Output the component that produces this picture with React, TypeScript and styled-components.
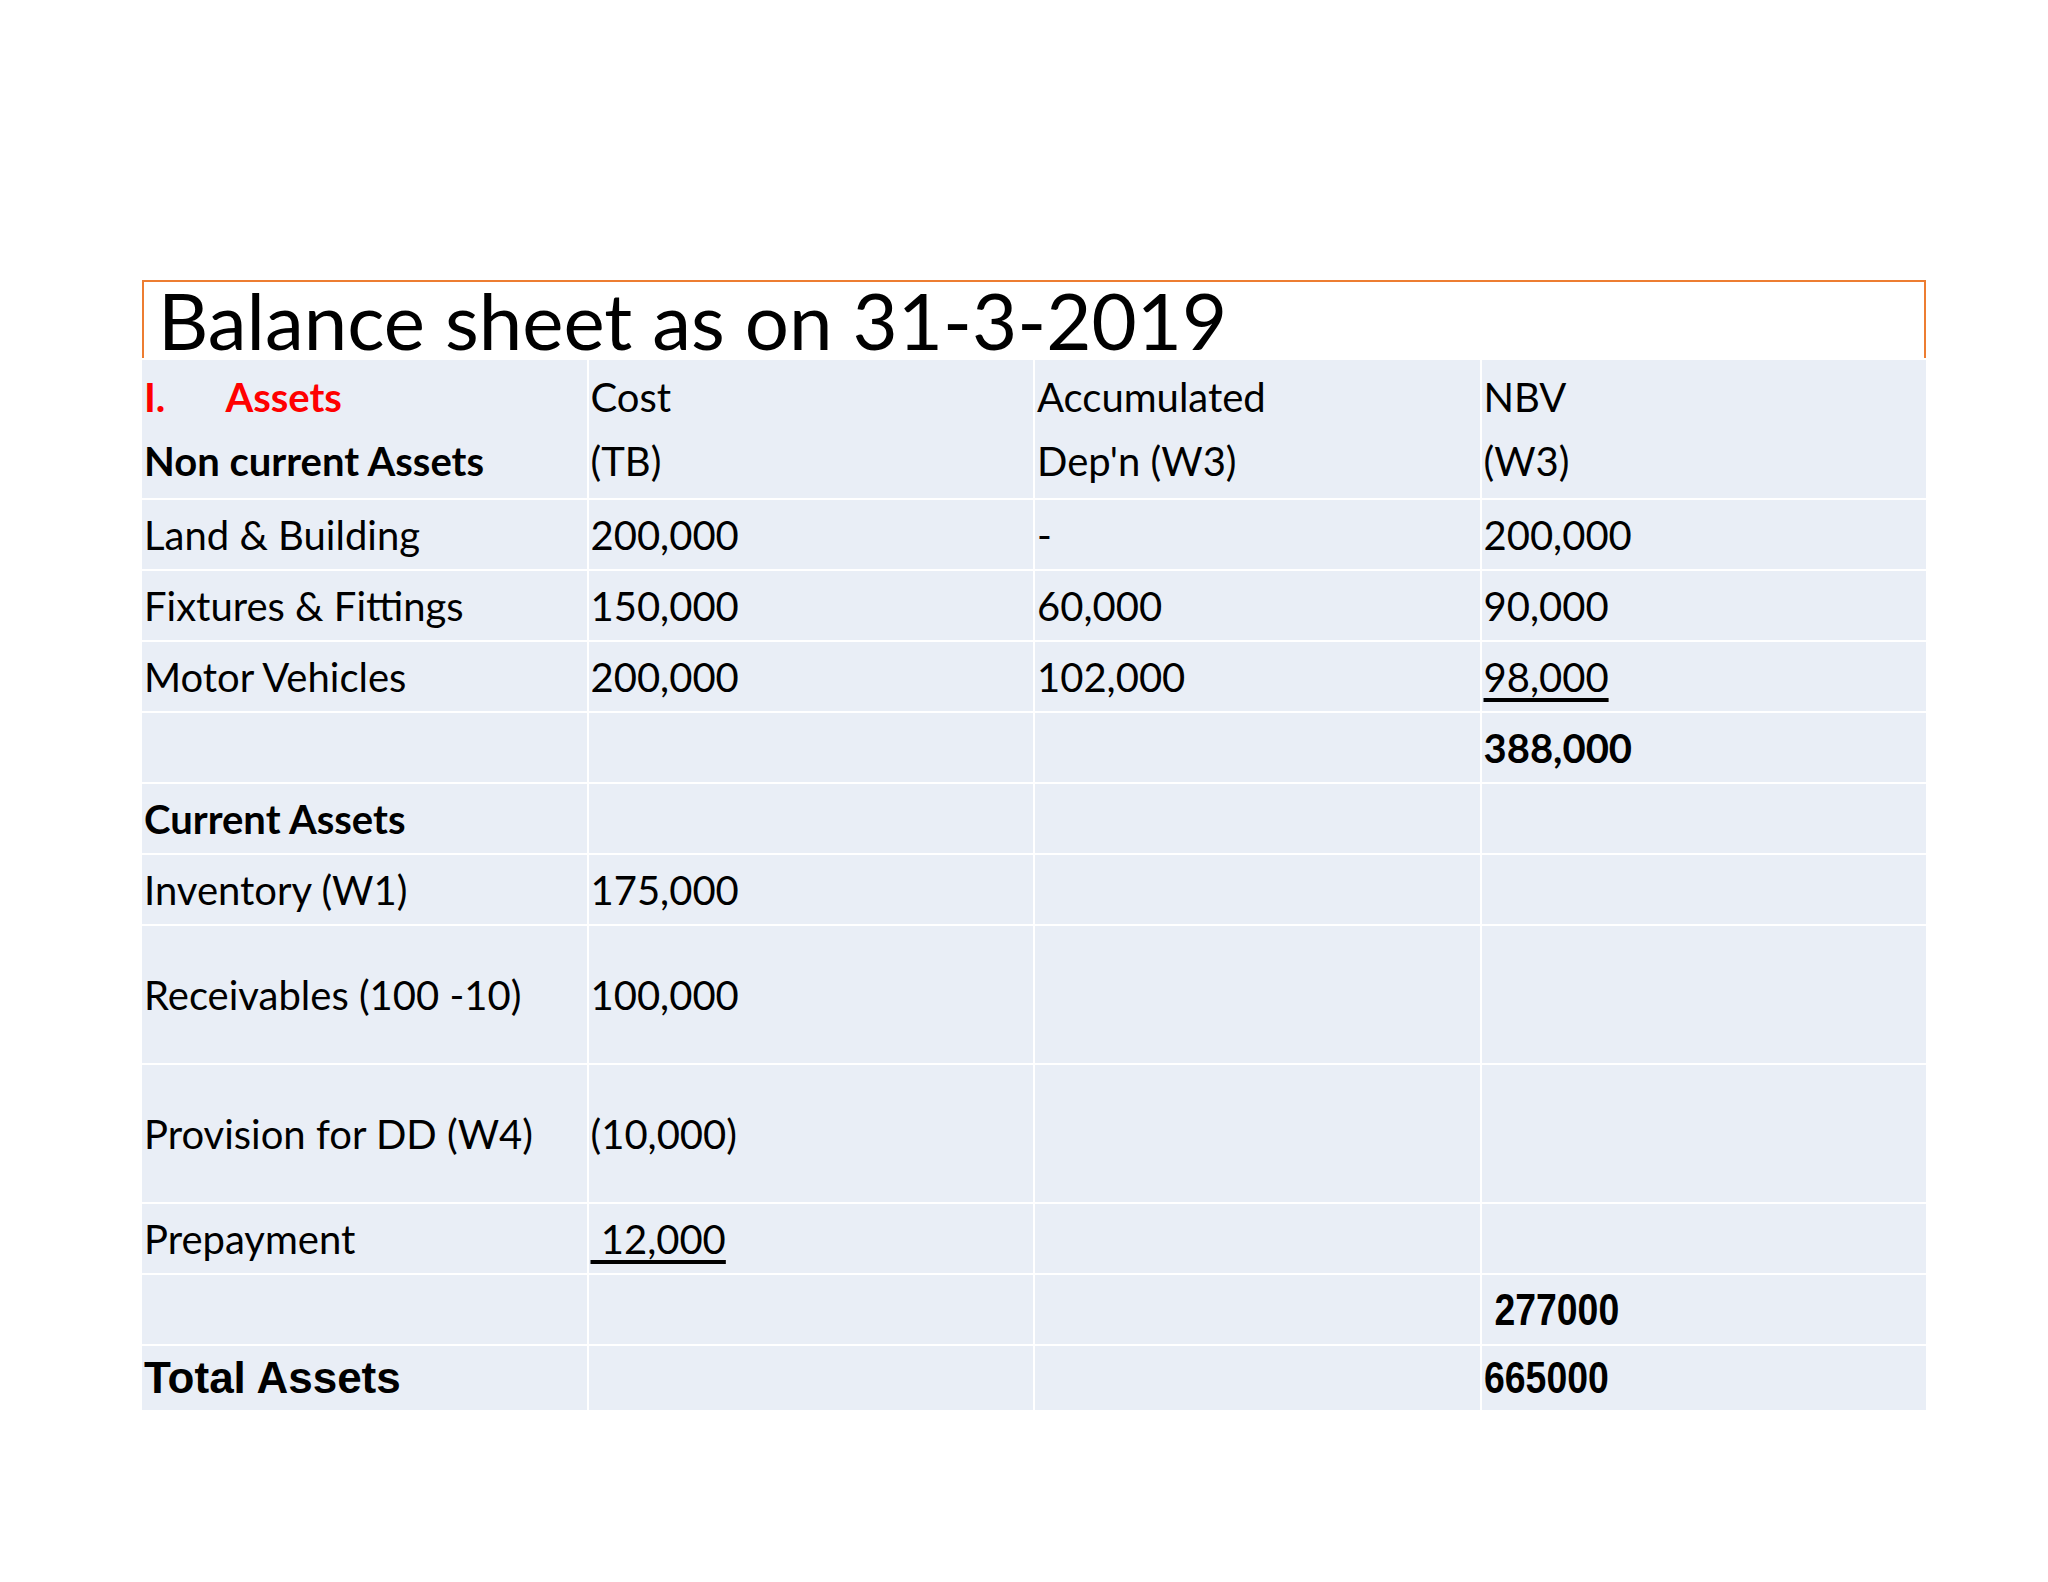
import React from 'react';
import styled, { createGlobalStyle } from 'styled-components';

const Global = createGlobalStyle`
  body { margin: 0; background: #fff; }
`;

type RowData = { cells: React.ReactNode[]; h: number };

const getRows = (): RowData[] => [
  { cells: ['Land & Building', '200,000', '-', '200,000'], h: 69 },
  { cells: ['Fixtures & Fittings', '150,000', '60,000', '90,000'], h: 69 },
  { cells: ['Motor Vehicles', '200,000', '102,000', <U key="u">98,000</U>], h: 69 },
  { cells: ['', '', '', <b key="b">388,000</b>], h: 69 },
  { cells: [<b key="c">Current Assets</b>, '', '', ''], h: 69 },
  { cells: ['Inventory (W1)', '175,000', '', ''], h: 69 },
  { cells: ['Receivables (100 -10)', '100,000', '', ''], h: 137 },
  { cells: ['Provision for DD (W4)', '(10,000)', '', ''], h: 137 },
  { cells: ['Prepayment', <U key="p">{'\u00a012,000'}</U>, '', ''], h: 69 },
  { cells: ['', '', '', <Narrow key="n">{'\u00a0277000'}</Narrow>], h: 69 },
];

export default function App() {
  const rows = getRows();
  return (
    <Page>
      <Global />
      <Sheet>
        <Title>Balance sheet as on 31-3-2019</Title>
        <Table>
          <Row $h={138}>
            <Cell>
              <Red>I.<Gap />Assets</Red>
              <b>Non current Assets</b>
            </Cell>
            <Cell>Cost<br />(TB)</Cell>
            <Cell>Accumulated<br />Dep'n (W3)</Cell>
            <Cell>NBV<br />(W3)</Cell>
          </Row>
          {rows.map((r, i) => (
            <Row key={i} $h={r.h}>
              {r.cells.map((c, j) => <Cell key={j}>{c}</Cell>)}
            </Row>
          ))}
          <Row $h={62}>
            <Cell><Arial>Total Assets</Arial></Cell>
            <Cell />
            <Cell />
            <Cell><Narrow>665000</Narrow></Cell>
          </Row>
        </Table>
      </Sheet>
    </Page>
  );
}

const Page = styled.div`
  width: 2048px;
  height: 1582px;
  padding: 280px 0 0 142px;
  box-sizing: border-box;
`;

const Sheet = styled.div`
  width: 1784px;
`;

const Title = styled.div`
  height: 76px;
  border: 2px solid #ed7d31;
  border-bottom: none;
  font-family: Lato, 'Open Sans', sans-serif;
  font-size: 78px;
  line-height: 76px;
  padding-left: 14px;
  color: #000;
`;

const Table = styled.div`
  display: flex;
  flex-direction: column;
  gap: 2px;
  background: #fff;
  margin-top: 2px;
`;

const Row = styled.div<{ $h: number }>`
  display: grid;
  grid-template-columns: repeat(4, 1fr);
  gap: 2px;
  height: ${(p) => p.$h}px;
`;

const Cell = styled.div`
  background: #e9eef6;
  display: flex;
  flex-direction: column;
  justify-content: center;
  font-family: Lato, 'Open Sans', sans-serif;
  font-size: 40px;
  line-height: 64px;
  color: #000;
  padding-left: 2px;
  white-space: pre;
`;

const Red = styled.span`
  color: #ff0000;
  font-weight: bold;
  display: flex;
`;

const Gap = styled.span`
  display: inline-block;
  width: 60px;
`;

const U = styled.span`
  text-decoration: underline;
  text-underline-offset: 6px;
`;

const Narrow = styled.span`
  font-weight: bold;
  font-family: 'Liberation Sans', Arial, sans-serif;
  font-size: 44px;
  display: inline-block;
  transform: scaleX(0.85);
  transform-origin: left center;
`;

const Arial = styled.span`
  font-weight: bold;
  font-family: 'Liberation Sans', Arial, sans-serif;
  font-size: 44px;
`;
